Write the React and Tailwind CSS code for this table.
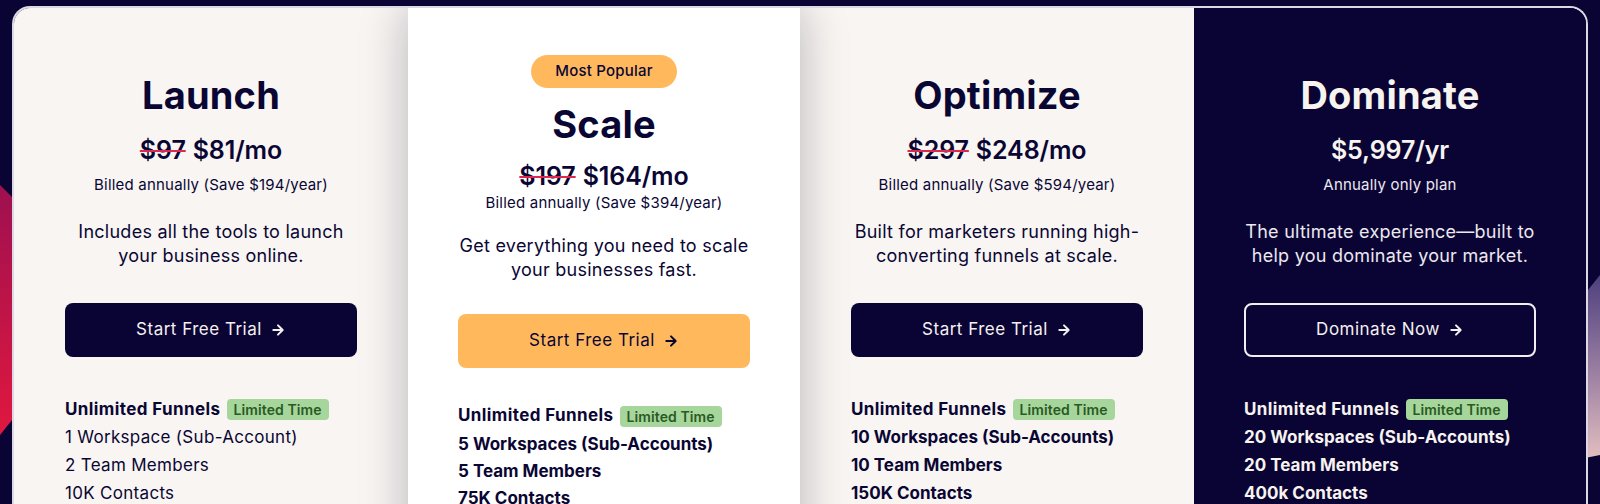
import React from "react";

function Arrow({ className = "" }) {
  return (
    <svg viewBox="0 0 24 24" className={className} fill="none" stroke="currentColor" strokeWidth="3" strokeLinecap="round" strokeLinejoin="round">
      <path d="M5 12h13" />
      <path d="M12 5l7 7-7 7" />
    </svg>
  );
}

function Badge() {
  return (
    <span className="ml-[6px] inline-flex h-[21px] items-center rounded-[4px] bg-[#a6d69b] px-[7px] text-[14px] font-semibold tracking-[0.1px] text-[#2a5a24]">
      Limited Time
    </span>
  );
}

function Card({ plan }) {
  const dark = plan.dark;
  const popular = plan.popular;
  return (
    <div
      className={
        "flex-1 flex flex-col items-center " +
        (popular
          ? "relative z-10 bg-white shadow-[0_0_44px_rgba(20,10,40,0.28)] pt-[47px] px-[50px]"
          : dark
          ? "bg-[#0a0434] pt-[65px] px-[50px]"
          : "bg-[#f8f5f2] pt-[65px] px-[51px]")
      }
    >
      {popular && (
        <div className="mb-[14px] flex h-[33px] w-[146px] items-center justify-center rounded-full bg-[#ffb95c] text-[15px] font-medium tracking-[0.2px] text-[#0a0634]">
          Most Popular
        </div>
      )}
      <div
        className={
          "h-[44px] text-[38px] leading-[44px] font-bold tracking-[0.2px] " +
          (dark ? "text-[#f7f3ef]" : "text-[#0a0634]")
        }
      >
        {plan.name}
      </div>
      <div
        className={
          "h-[32px] text-[25px] leading-[32px] font-semibold tracking-[-0.1px] " +
          (popular ? "mt-[14px] " : "mt-[17px] ") +
          (dark ? "text-[#f7f3ef]" : "text-[#0a0634]")
        }
      >
        {plan.old && (
          <span className="line-through decoration-[#e0284f] decoration-[2px] mr-[7px]">{plan.old}</span>
        )}
        {plan.price}
      </div>
      <div
        className={
          "h-[20px] text-[15px] leading-[20px] tracking-[0.2px] " +
          (popular ? "mt-[1px] " : "mt-[9px] ") +
          (dark ? "text-[#ece8ef]" : "text-[#0a0634]")
        }
      >
        {plan.billed}
      </div>
      <div
        className={
          "text-center text-[18px] leading-[24px] tracking-[0.25px] " +
          (popular ? "mt-[21px] " : "mt-[25px] ") +
          (dark ? "text-[#ece8ef]" : "text-[#0a0634]")
        }
      >
        {plan.desc[0]}
        <br />
        {plan.desc[1]}
      </div>
      <button
        className={
          "flex w-full items-center justify-center gap-[8px] rounded-[8px] text-[17px] tracking-[0.5px] " +
          (popular
            ? "mt-[32px] h-[54px] bg-[#ffb95c] text-[#0a0634]"
            : dark
            ? "mt-[35px] h-[54px] border-2 border-[#f2eef2] bg-transparent text-[#f4f0f0]"
            : "mt-[35px] h-[54px] bg-[#0a0434] text-[#f4f0f0]")
        }
      >
        <span>{plan.cta}</span>
        <Arrow className="h-[16px] w-[16px]" />
      </button>
      <div
        className={
          "w-full flex flex-col " +
          (popular ? "mt-[33px] " : "mt-[38px] ") +
          (dark ? "text-[#f7f3ef]" : "text-[#0a0634]")
        }
      >
        <div className={"flex items-center text-[17px] font-bold tracking-[0.4px] " + (popular ? "h-[30px]" : "h-[29px]")}>
          Unlimited Funnels
          <Badge />
        </div>
        {plan.features.map((f) => (
          <div
            key={f}
            className={
              "flex items-center text-[17px] " +
              (popular ? "h-[27px] " : "h-[28px] ") +
              (plan.boldFeatures ? "font-bold tracking-[0px]" : "font-normal tracking-[0.3px]")
            }
          >
            {f}
          </div>
        ))}
      </div>
    </div>
  );
}

const plans = [
  {
    name: "Launch",
    old: "$97",
    price: "$81/mo",
    billed: "Billed annually (Save $194/year)",
    desc: ["Includes all the tools to launch", "your business online."],
    cta: "Start Free Trial",
    features: ["1 Workspace (Sub-Account)", "2 Team Members", "10K Contacts"],
  },
  {
    name: "Scale",
    popular: true,
    old: "$197",
    price: "$164/mo",
    billed: "Billed annually (Save $394/year)",
    desc: ["Get everything you need to scale", "your businesses fast."],
    cta: "Start Free Trial",
    boldFeatures: true,
    features: ["5 Workspaces (Sub-Accounts)", "5 Team Members", "75K Contacts"],
  },
  {
    name: "Optimize",
    old: "$297",
    price: "$248/mo",
    billed: "Billed annually (Save $594/year)",
    desc: ["Built for marketers running high-", "converting funnels at scale."],
    cta: "Start Free Trial",
    boldFeatures: true,
    features: ["10 Workspaces (Sub-Accounts)", "10 Team Members", "150K Contacts"],
  },
  {
    name: "Dominate",
    dark: true,
    price: "$5,997/yr",
    billed: "Annually only plan",
    desc: ["The ultimate experience\u2014built to", "help you dominate your market."],
    cta: "Dominate Now",
    boldFeatures: true,
    features: ["20 Workspaces (Sub-Accounts)", "20 Team Members", "400k Contacts"],
  },
];

export default function App() {
  return (
    <div
      className="relative h-[504px] w-[1600px] overflow-hidden bg-[#0a0434] pt-[6px] px-[12px]"
      style={{ fontFamily: "Inter, 'Noto Sans', sans-serif" }}
    >
      {/* decorative background shapes */}
      <svg className="absolute left-0 top-[185px] h-[260px] w-[40px]" viewBox="0 0 40 260" preserveAspectRatio="none">
        <defs>
          <linearGradient id="lg1" x1="0" y1="0" x2="0" y2="1">
            <stop offset="0" stopColor="#9e1050" />
            <stop offset="1" stopColor="#e0183f" />
          </linearGradient>
        </defs>
        <polygon points="0,0 40,40 40,200 0,250" fill="url(#lg1)" />
      </svg>
      <svg className="absolute right-0 top-[275px] h-[190px] w-[40px]" viewBox="0 0 40 190" preserveAspectRatio="none">
        <defs>
          <linearGradient id="lg2" x1="0" y1="0" x2="0" y2="1">
            <stop offset="0" stopColor="#4d3f7e" />
            <stop offset="0.6" stopColor="#a88aa8" />
            <stop offset="1" stopColor="#e6c2c0" />
          </linearGradient>
        </defs>
        <polygon points="40,0 40,180 0,188 0,50" fill="url(#lg2)" />
      </svg>

      <div className="relative flex h-[560px] overflow-hidden rounded-t-[18px] border-2 border-b-0 border-[#dcd8e6]">
        {plans.map((p) => (
          <Card key={p.name} plan={p} />
        ))}
      </div>
    </div>
  );
}
